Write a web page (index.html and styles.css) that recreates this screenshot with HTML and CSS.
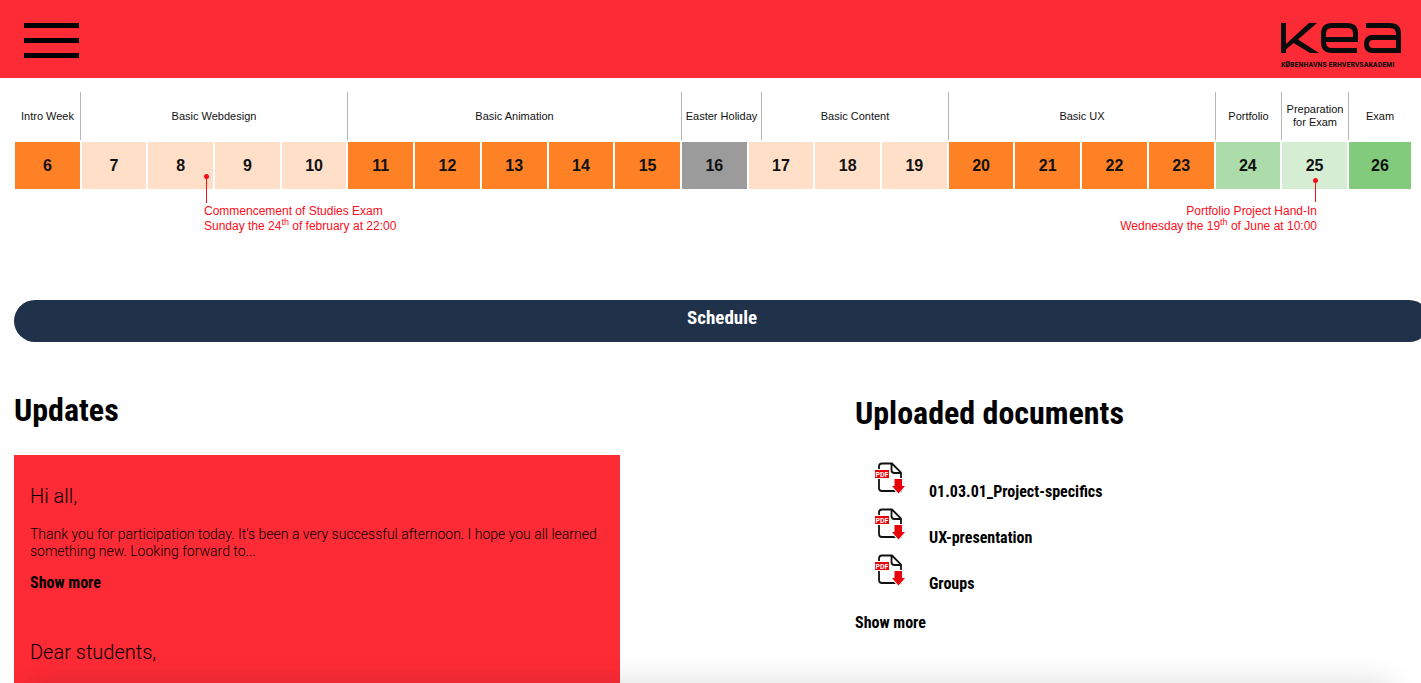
FILE: index.html
```html
<!DOCTYPE html>
<html lang="en">
<head>
  <meta charset="utf-8">
  <meta name="viewport" content="width=device-width, initial-scale=1">
  <title>KEA</title>
  <link rel="stylesheet" href="styles.css">
</head>
<body>
  <header class="topbar">
    <button class="menu" type="button" aria-label="Menu"><span></span><span></span><span></span></button>
    <a class="logo" href="#" aria-label="KEA Københavns Erhvervsakademi">
      <svg viewBox="0 0 120 30" fill="none" stroke="#0b0b0b" stroke-width="5" aria-hidden="true">
        <path d="M0 0H5V21L28 0H36L17 16.500L38 30H29L12.500 20L5 26.500V30H0Z" fill="#0b0b0b" stroke="none"/>
        <path d="M76 27.500H51Q42.500 27.500 42.500 19V11Q42.500 2.500 51 2.500H66Q74.500 2.500 74.500 10V16.500H43"/>
        <path d="M85 2.500H109Q117.500 2.500 117.500 11V27.500H92Q85.500 27.500 85.500 21Q85.500 14.500 92 14.500H117"/>
      </svg>
      <span>KØBENHAVNS ERHVERVSAKADEMI</span>
    </a>
  </header>

  <main>
    <section class="timeline" aria-label="Semester timeline">
      <ol class="phases">
        <li>Intro Week</li><li>Basic Webdesign</li><li>Basic Animation</li><li>Easter Holiday</li><li>Basic Content</li><li>Basic UX</li><li>Portfolio</li><li>Preparation for Exam</li><li>Exam</li>
      </ol>
      <ol class="weeks">
        <li class="orange">6</li>
        <li class="peach">7</li><li class="peach">8</li><li class="peach">9</li><li class="peach">10</li>
        <li class="orange">11</li><li class="orange">12</li><li class="orange">13</li><li class="orange">14</li><li class="orange">15</li>
        <li class="grey">16</li>
        <li class="peach">17</li><li class="peach">18</li><li class="peach">19</li>
        <li class="orange">20</li><li class="orange">21</li><li class="orange">22</li><li class="orange">23</li>
        <li class="green">24</li><li class="mint">25</li><li class="leaf">26</li>
      </ol>
      <div class="notes">
        <p class="note">Commencement of Studies Exam<br>Sunday the 24<sup>th</sup> of february at 22:00</p>
        <p class="note note-end">Portfolio Project Hand-In<br>Wednesday the 19<sup>th</sup> of June at 10:00</p>
      </div>
    </section>

    <button class="schedule" type="button">Schedule</button>

    <div class="columns">
      <section>
        <h1>Updates</h1>
        <div class="feed">
          <article>
            <h2>Hi all,</h2>
            <p>Thank you for participation today. It's been a very successful afternoon. I hope you all learned something new. Looking forward to...</p>
            <a class="more" href="#">Show more</a>
          </article>
          <article>
            <h2>Dear students,</h2>
          </article>
        </div>
      </section>
      <section class="documents">
        <h1>Uploaded documents</h1>
        <ul>
          <li><a href="#">
            <svg viewBox="0 0 30 32" aria-hidden="true">
              <path class="sheet" d="M4 8V4.500Q4 1.500 7 1.500H17L26 10.500V29H7Q4 29 4 26ZM16.500 1.500V8Q16.500 11 19.500 11H26"/>
              <path class="halo" d="M18 16H28V23.500H32L23.500 33L15 23.500H18Z"/>
              <path class="arrow" d="M19.500 17H27V24H30L23.500 31.500L17 24H19.500Z"/>
              <rect class="halo" y="7" width="15" height="10"/>
              <rect class="badge" y="8" width="14" height="8"/>
              <text x="7" y="14.500">PDF</text>
            </svg>
            <span>01.03.01_Project-specifics</span>
          </a></li>
          <li><a href="#">
            <svg viewBox="0 0 30 32" aria-hidden="true">
              <path class="sheet" d="M4 8V4.500Q4 1.500 7 1.500H17L26 10.500V29H7Q4 29 4 26ZM16.500 1.500V8Q16.500 11 19.500 11H26"/>
              <path class="halo" d="M18 16H28V23.500H32L23.500 33L15 23.500H18Z"/>
              <path class="arrow" d="M19.500 17H27V24H30L23.500 31.500L17 24H19.500Z"/>
              <rect class="halo" y="7" width="15" height="10"/>
              <rect class="badge" y="8" width="14" height="8"/>
              <text x="7" y="14.500">PDF</text>
            </svg>
            <span>UX-presentation</span>
          </a></li>
          <li><a href="#">
            <svg viewBox="0 0 30 32" aria-hidden="true">
              <path class="sheet" d="M4 8V4.500Q4 1.500 7 1.500H17L26 10.500V29H7Q4 29 4 26ZM16.500 1.500V8Q16.500 11 19.500 11H26"/>
              <path class="halo" d="M18 16H28V23.500H32L23.500 33L15 23.500H18Z"/>
              <path class="arrow" d="M19.500 17H27V24H30L23.500 31.500L17 24H19.500Z"/>
              <rect class="halo" y="7" width="15" height="10"/>
              <rect class="badge" y="8" width="14" height="8"/>
              <text x="7" y="14.500">PDF</text>
            </svg>
            <span>Groups</span>
          </a></li>
        </ul>
        <a class="more" href="#">Show more</a>
      </section>
    </div>
  </main>
  <div class="edge-shade"></div>
</body>
</html>
```
FILE: styles.css
```css
:root {
  --condensed: "Roboto Condensed", Roboto, sans-serif;
  --light: Roboto, sans-serif;
}

* { box-sizing: border-box; }

body {
  margin: 0;
  overflow-x: hidden;
  background: #fff;
  color: #000;
  font-family: "Liberation Sans", Arial, sans-serif;
}

h1, h2, p, ul, ol { margin: 0; padding: 0; }
ul, ol { list-style: none; }
a { color: inherit; text-decoration: none; }

.topbar {
  display: flex;
  justify-content: space-between;
  align-items: flex-start;
  height: 78px;
  padding: 23px 20px 0 24px;
  background: #fd2b35;
}

.menu {
  display: grid;
  gap: 10px;
  width: 55px;
  padding: 0;
  border: 0;
  background: none;
}
.menu span { height: 5px; background: #000; }

.logo {
  width: 120px;
  color: #0b0b0b;
  font: bold 8px/10px var(--condensed);
  white-space: nowrap;
}
.logo svg { display: block; width: 120px; height: 30px; margin-bottom: 7px; }
.logo span { display: block; }

.timeline { padding: 14px 10px 0 15px; }

.phases {
  display: grid;
  grid-template-columns: 65fr 267fr 334fr 80fr 187fr 267fr 66fr 67fr 63fr;
  height: 48px;
  font-size: 11px;
  line-height: 13px;
  text-align: center;
  color: #111;
}
.phases li {
  display: flex;
  align-items: center;
  justify-content: center;
  min-width: 0;
}
.phases li + li { border-left: 1px solid #b5b5b5; }

.weeks {
  display: grid;
  grid-template-columns: repeat(20, 100fr) 96fr;
  gap: 2px;
  margin-top: 2px;
  font-size: 16px;
  font-weight: bold;
  line-height: 47px;
  text-align: center;
  color: #111;
}
.orange { background: #ff8126; }
.peach { background: #ffdfc8; }
.grey { background: #9b9b9b; }
.green { background: #abdca9; }
.mint { background: #d5edd2; }
.leaf { background: #82ca7c; }

.notes {
  display: flex;
  justify-content: space-between;
  align-items: flex-start;
  padding: 15px 94px 0 189px;
  color: #fb0d1b;
  font-size: 12px;
  line-height: 15px;
}
.note { position: relative; }
.note-end { text-align: right; }
.note sup { font-size: 9px; line-height: 0; }
.note::before,
.note::after {
  content: "";
  position: absolute;
  background: #fb0d1b;
}
.note::before { left: 2px; bottom: 31px; width: 1px; height: 27px; }
.note::after { left: 0; bottom: 55px; width: 5px; height: 5px; border-radius: 50%; }
.note-end::before { left: auto; right: 1px; height: 22px; bottom: 32px; }
.note-end::after { left: auto; right: -1px; bottom: 51px; }

.schedule {
  display: block;
  width: calc(100% - 5px);
  height: 42px;
  margin: 66px 0 0 14px;
  padding: 0 0 6px;
  border: 0;
  border-radius: 21px;
  background: #20314a;
  color: #fff;
  font: bold 19px/24px var(--condensed);
}

.columns {
  display: grid;
  grid-template-columns: 841fr 552fr;
  padding: 48px 14px 0;
}

h1 { font: bold 32px/40px var(--condensed); }

.feed {
  width: 72%;
  margin-top: 25px;
  padding: 28px 16px 18px;
  background: #fd2b35;
}
.feed article + article { margin-top: 46px; }
.feed h2 { font: 300 20px/26px var(--light); }
.feed p { margin: 17px 0 13px; font: 300 14px/17px var(--light); }

.more {
  display: block;
  font: bold 16px/20px var(--condensed);
}

.documents { padding-top: 3px; }
.documents ul { margin: 29px 0 13px 20px; }
.documents li a {
  display: flex;
  gap: 24px;
  height: 46px;
  font: bold 16px/20px var(--condensed);
}
.documents li svg { width: 30px; height: 32px; }
.documents li span { padding-top: 20px; }

.sheet { fill: none; stroke: #111; stroke-width: 1.8; }
.halo { fill: #fff; }
.arrow, .badge { fill: #e90008; }
.documents svg text {
  fill: #fff;
  font: bold 7px Roboto, sans-serif;
  text-anchor: middle;
}

.edge-shade {
  position: fixed;
  right: 30px;
  bottom: -60px;
  left: 30px;
  height: 60px;
  box-shadow: 0 0 30px rgba(0, 0, 0, 0.14);
}
```
